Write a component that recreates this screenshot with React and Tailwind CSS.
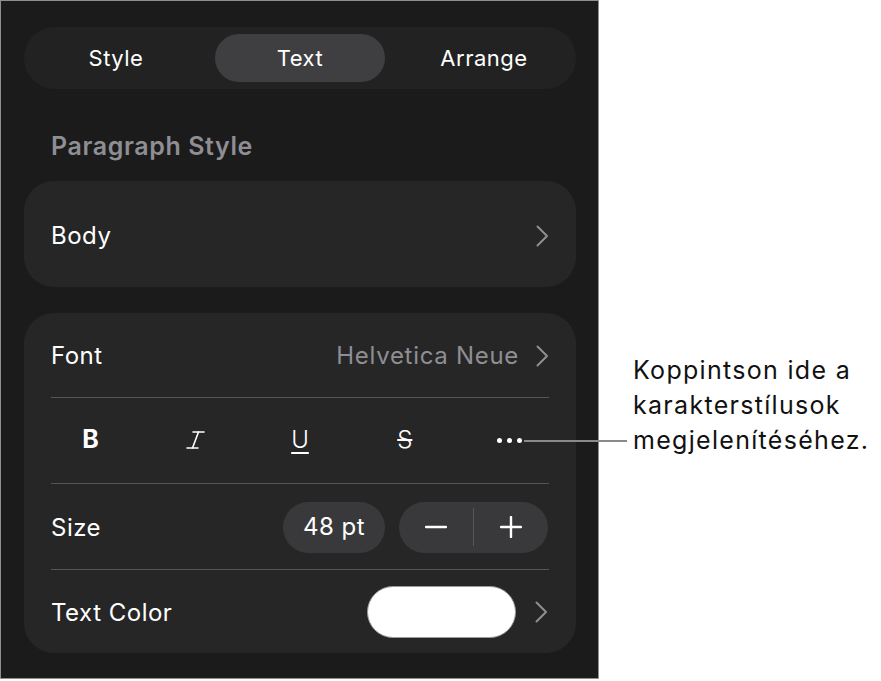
import React from "react";

function Chevron({ className = "" }) {
  return (
    <svg width="14" height="24" viewBox="0 0 14 24" className={className} fill="none">
      <polyline points="2.5,2.5 12,12 2.5,21.5" stroke="#8e8e93" strokeWidth="2" strokeLinecap="round" strokeLinejoin="round" />
    </svg>
  );
}

function Sep() {
  return <div className="mx-[27px] h-px bg-[#545456]" />;
}

export default function App() {
  return (
    <div
      className="relative w-[881px] h-[681px] bg-white flex"
      style={{ fontFamily: "Inter, 'Noto Sans', sans-serif" }}
    >
      <div className="w-[599px] h-[679px] border border-[#8f8f8f] bg-[#1b1b1c] pl-[23px] pr-[22px] pt-[26px] flex flex-col">
        {/* Segmented control */}
        <div className="h-[62px] rounded-full bg-[#222223] grid grid-cols-3 items-center text-[22px] tracking-[0.5px] text-white">
          <div className="flex justify-center">Style</div>
          <div className="flex justify-center">
            <div className="w-[170px] h-[48px] rounded-full bg-[#3f3f41] flex items-center justify-center">Text</div>
          </div>
          <div className="flex justify-center">Arrange</div>
        </div>

        <div className="mt-[43px] h-[28px] leading-[28px] pl-[27px] text-[25px] tracking-[0.6px] font-semibold text-[#8e8e93]">
          Paragraph Style
        </div>

        <div className="mt-[21px] h-[106px] rounded-[30px] bg-[#262627] flex items-center justify-between pl-[27px] pr-[27px] pt-[3px] text-[24px] tracking-[0.5px] text-white">
          <span>Body</span>
          <Chevron />
        </div>

        <div className="mt-[26px] h-[340px] rounded-[30px] bg-[#262627] flex flex-col text-[24px] tracking-[0.5px] text-white">
          <div className="h-[84px] flex items-center justify-between pl-[27px] pr-[27px] pt-[3px]">
            <span>Font</span>
            <div className="flex items-center gap-[16px]">
              <span className="text-[#8e8e93] tracking-[0.7px]">Helvetica Neue</span>
              <Chevron />
            </div>
          </div>
          <Sep />
          <div className="h-[85px] grid grid-cols-5 items-center px-[14px] tracking-normal">
            <div className="flex justify-center font-bold text-[25px]">B</div>
            <div className="flex justify-center">
              <svg width="19" height="18" viewBox="0 0 19 18" fill="none" stroke="white" strokeWidth="1.6" strokeLinecap="round">
                <line x1="7" y1="1" x2="18" y2="1" />
                <line x1="1" y1="17" x2="12" y2="17" />
                <line x1="12.5" y1="1" x2="6.5" y2="17" />
              </svg>
            </div>
            <div className="flex justify-center">
              <span className="font-light underline underline-offset-[4px] decoration-[1.5px] text-[24px]">U</span>
            </div>
            <div className="flex justify-center">
              <span className="font-light line-through decoration-[1.5px] text-[24px]">S</span>
            </div>
            <div className="flex justify-center items-center gap-[5px]">
              <span className="w-[5px] h-[5px] rounded-full bg-white" />
              <span className="w-[5px] h-[5px] rounded-full bg-white" />
              <span className="w-[5px] h-[5px] rounded-full bg-white" />
            </div>
          </div>
          <Sep />
          <div className="h-[86px] flex items-center justify-between pl-[27px] pr-[28px]">
            <span className="pt-[3px]">Size</span>
            <div className="flex items-center gap-[14px] pt-[2px]">
              <div className="w-[102px] h-[51px] rounded-full bg-[#39393b] flex items-center justify-center">48 pt</div>
              <div className="w-[149px] h-[51px] rounded-full bg-[#39393b] flex items-center">
                <div className="flex-1 flex justify-center">
                  <svg width="22" height="22" viewBox="0 0 22 22" stroke="white" strokeWidth="2.4" strokeLinecap="round">
                    <line x1="1" y1="11" x2="21" y2="11" />
                  </svg>
                </div>
                <div className="w-px h-[38px] bg-[#58585a]" />
                <div className="flex-1 flex justify-center">
                  <svg width="22" height="22" viewBox="0 0 22 22" stroke="white" strokeWidth="2.4" strokeLinecap="round">
                    <line x1="1" y1="11" x2="21" y2="11" />
                    <line x1="11" y1="1" x2="11" y2="21" />
                  </svg>
                </div>
              </div>
            </div>
          </div>
          <Sep />
          <div className="h-[83px] flex items-center justify-between pl-[27px] pr-[28px]">
            <span className="pt-[3px]">Text Color</span>
            <div className="flex items-center gap-[18px]">
              <div className="w-[149px] h-[52px] rounded-full bg-white border border-[#9a9a9a]" />
              <Chevron />
            </div>
          </div>
        </div>
      </div>

      <div className="pl-[34px] pt-[353px] text-[25px] tracking-[1.3px] leading-[35px] text-[#111] whitespace-nowrap">
        <div>Koppintson ide a</div>
        <div>karakterstílusok</div>
        <div>megjelenítéséhez.</div>
      </div>

      <div className="absolute left-[524px] top-[440px] w-[103px] h-[1.5px] bg-[#8a8a8a]" />
    </div>
  );
}
